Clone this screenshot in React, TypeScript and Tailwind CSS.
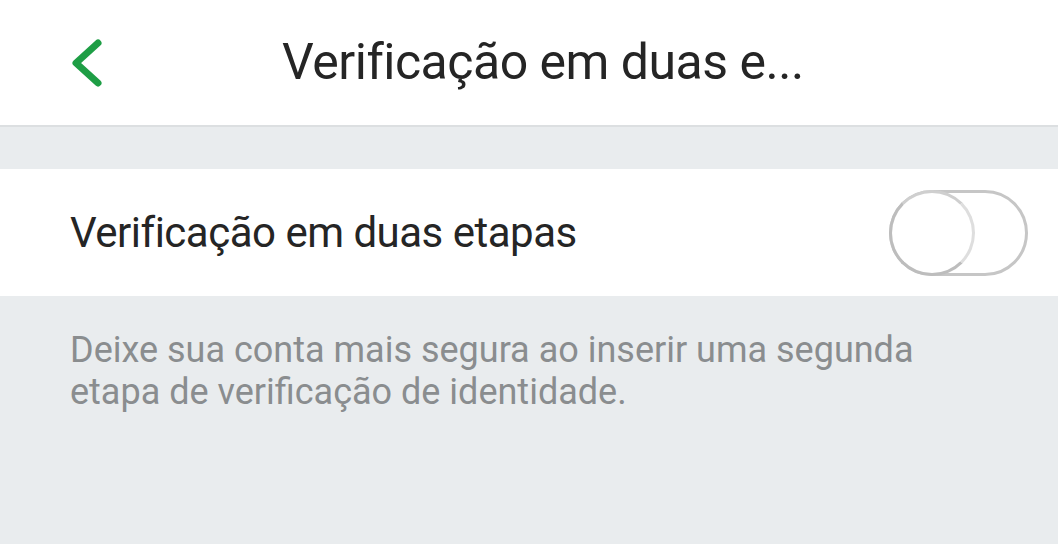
import React from "react";

export default function App() {
  return (
    <div className="w-[1058px] h-[544px] bg-[#e9ecee] overflow-hidden" style={{ fontFamily: 'Roboto, "Noto Sans", sans-serif' }}>
      <header className="h-[127px] bg-white border-b-2 border-[#dcdfe1] flex items-center">
        <div className="w-[282px] flex items-center pl-[68px] h-full">
          <svg width="40" height="52" viewBox="0 0 40 52" fill="none">
            <path d="M30 6 L8 26 L30 46" stroke="#1e9e45" strokeWidth="7" strokeLinecap="round" strokeLinejoin="round" />
          </svg>
        </div>
        <h1 className="text-[50px] leading-none text-[#252525] tracking-[-0.5px] mb-[2px]">Verificação em duas e...</h1>
      </header>
      <div className="h-[42px]" />
      <div className="h-[127px] bg-white flex items-center justify-between pl-[70px] pr-[30px]">
        <span className="text-[42px] text-[#252525] tracking-[-0.5px]">Verificação em duas etapas</span>
        <div className="relative w-[139px] h-[86px] rounded-full border-[3px] border-[#c6c6c6]">
          <div className="absolute left-[-3px] top-[-3px] w-[86px] h-[86px] rounded-full bg-white border-[3px] border-[#bdbdbd] border-r-[#dedede] border-t-[#cfcfcf]" />
        </div>
      </div>
      <p className="pl-[70px] pr-[20px] pt-[33px] text-[36px] leading-[42px] text-[#8a8d8f] tracking-[0px]">
        Deixe sua conta mais segura ao inserir uma segunda
        <br />
        etapa de verificação de identidade.
      </p>
    </div>
  );
}
